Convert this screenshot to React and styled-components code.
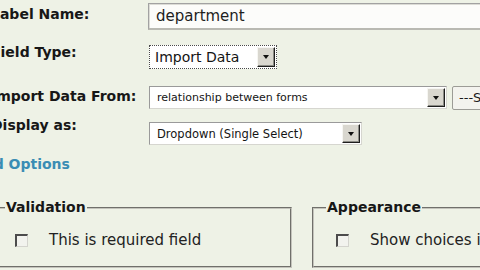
import React from 'react';
import styled, { createGlobalStyle } from 'styled-components';

const GlobalStyle = createGlobalStyle`
  html, body {
    margin: 0;
    padding: 0;
    background: #eef2e6;
    overflow: hidden;
  }
  body {
    width: 480px;
    height: 270px;
    font-family: "DejaVu Sans", Verdana, sans-serif;
  }
`;

const Page = styled.div`
  margin-left: -9px;
  width: 640px;
`;

const Row = styled.div`
  display: flex;
  align-items: center;
  height: ${(p) => p.$h}px;
`;

const Label = styled.div`
  flex: none;
  width: 157px;
  font: bold 14px/17px "DejaVu Sans", Verdana, sans-serif;
  color: #171717;
  margin-bottom: ${(p) => p.$lift || 0}px;
`;

const TextInput = styled.input`
  box-sizing: border-box;
  width: 360px;
  height: 27px;
  padding: 0 7px;
  border: 1px solid #a2a2a2;
  border-bottom: 2px solid #b9b9b2;
  box-shadow: inset 1px 1px 0 #dcdcd6;
  background: #fcfcfa;
  font: 15px "DejaVu Sans", Verdana, sans-serif;
  color: #1e1e1e;
  outline: none;
`;

const Select = styled.div`
  box-sizing: border-box;
  display: flex;
  width: ${(p) => p.$w}px;
  height: ${(p) => p.$h}px;
  margin-left: 1px;
  padding: 1px;
  background: #fff;
  border: 1px ${(p) => (p.$focus ? 'dotted #4a4a4a' : 'solid #9a9a9a')};
  border-right-color: ${(p) => (p.$focus ? '#4a4a4a' : '#d6d6d0')};
  border-bottom-color: ${(p) => (p.$focus ? '#4a4a4a' : '#d6d6d0')};
`;

const SelectText = styled.span`
  flex: 1;
  display: flex;
  align-items: center;
  padding-left: ${(p) => p.$pad}px;
  font-size: ${(p) => p.$size}px;
  color: #141414;
  white-space: nowrap;
  overflow: hidden;
`;

const Arrow = styled.span`
  box-sizing: border-box;
  flex: none;
  width: 18px;
  display: flex;
  align-items: center;
  justify-content: center;
  background: #d9d7cf;
  border: 1px solid;
  border-color: #f6f6f2 #1e1e1e #1e1e1e #f6f6f2;
  box-shadow: inset -1px -1px 0 #8c8c86;

  &::after {
    content: '';
    border-left: 3.5px solid transparent;
    border-right: 3.5px solid transparent;
    border-top: 4px solid #111;
  }
`;

const PickButton = styled.button`
  box-sizing: border-box;
  height: 24px;
  margin-left: 5px;
  padding: 0 6px;
  background: #f3f3ee;
  border: 1px solid #9c9c96;
  border-radius: 2px;
  font: 13px "DejaVu Sans", Verdana, sans-serif;
  color: #1a1a1a;
  white-space: nowrap;
`;

const Heading = styled.h3`
  margin: 3px 0 0 -26px;
  font: bold 14px/17px "DejaVu Sans", Verdana, sans-serif;
  color: #3a8db4;
`;

const Groups = styled.div`
  display: flex;
  align-items: flex-start;
  gap: 20px;
  margin-top: 26px;
`;

const Group = styled.fieldset`
  box-sizing: border-box;
  min-width: 0;
  width: ${(p) => p.$w}px;
  margin: 0;
  padding: 0 12px 16px;
  border: 2px groove #c4c4bc;
`;

const Legend = styled.legend`
  padding: 0 1px;
  font: bold 14px/17px "DejaVu Sans", Verdana, sans-serif;
  color: #171717;
`;

const CheckRow = styled.label`
  display: flex;
  align-items: center;
  gap: 21px;
  height: 20px;
  margin-top: 14px;
  padding-left: 10px;
  font: 15px/20px "DejaVu Sans", Verdana, sans-serif;
  color: #222;
  white-space: nowrap;
`;

const Box = styled.span`
  box-sizing: border-box;
  flex: none;
  width: 13px;
  height: 13px;
  background: #f2f3ee;
  border-top: 2px solid #4c4c4c;
  border-left: 2px solid #4c4c4c;
  border-right: 1px solid #d4d4ce;
  border-bottom: 1px solid #d4d4ce;
`;

export default function App() {
  return (
    <>
      <GlobalStyle />
      <Page>
        <Row $h={33}>
          <Label $lift={5}>Label Name:</Label>
          <TextInput defaultValue="department" readOnly />
        </Row>
        <Row $h={48}>
          <Label $lift={9}>Field Type:</Label>
          <Select $w={128} $h={24} $focus>
            <SelectText $pad={4} $size={14}>Import Data</SelectText>
            <Arrow />
          </Select>
        </Row>
        <Row $h={33}>
          <Label $lift={3}>Import Data From:</Label>
          <Select $w={298} $h={23}>
            <SelectText $pad={6} $size={11}>relationship between forms</SelectText>
            <Arrow />
          </Select>
          <PickButton>---Select Form---</PickButton>
        </Row>
        <Row $h={39}>
          <Label $lift={17}>Display as:</Label>
          <Select $w={213} $h={23}>
            <SelectText $pad={6} $size={11.5}>Dropdown (Single Select)</SelectText>
            <Arrow />
          </Select>
        </Row>
        <Heading>Field Options</Heading>
        <Groups>
          <Group $w={302}>
            <Legend>Validation</Legend>
            <CheckRow>
              <Box />
              This is required field
            </CheckRow>
          </Group>
          <Group $w={320}>
            <Legend>Appearance</Legend>
            <CheckRow>
              <Box />
              Show choices in columns
            </CheckRow>
          </Group>
        </Groups>
      </Page>
    </>
  );
}
